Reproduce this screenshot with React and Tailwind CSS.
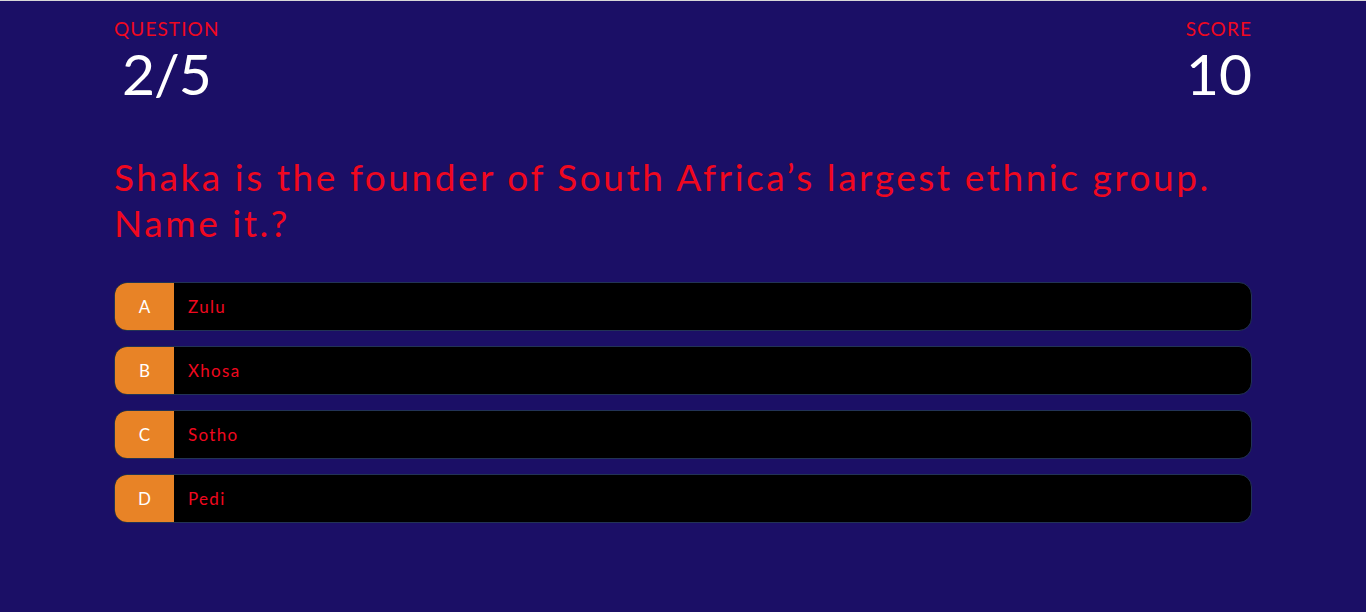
const answers = [
  { key: 'A', text: 'Zulu' },
  { key: 'B', text: 'Xhosa' },
  { key: 'C', text: 'Sotho' },
  { key: 'D', text: 'Pedi' },
]

const Stat = ({ label, value, align }) => (
  <div className={align === 'right' ? 'text-right' : 'text-left'}>
    <p className="text-[19px] leading-[22px] tracking-[1.1px] text-[#f0081f] uppercase">{label}</p>
    <p className={`mt-[3px] text-[57px] leading-[60px] text-white ${align === 'right' ? '' : 'pl-[8px] tracking-[-1px]'}`}>{value}</p>
  </div>
)

export default function App() {
  return (
    <div
      className="min-h-[612px] bg-[#1b0f66] border-t border-[#d8d8d8]"
      style={{ fontFamily: 'Lato, "Open Sans", sans-serif' }}
    >
      <div className="w-[1138px] mx-auto pt-[17px]">
        <div className="flex justify-between">
          <Stat label="Question" value="2/5" />
          <Stat label="Score" value="10" align="right" />
        </div>

        <h1 className="mt-[51px] text-[37px] leading-[46px] tracking-[2.55px] text-[#f0081f]">
          Shaka is the founder of South Africa’s largest ethnic group. Name it.?
        </h1>

        <div className="mt-[36px] flex flex-col gap-[15px]">
          {answers.map((a) => (
            <button
              key={a.key}
              type="button"
              className="flex h-[49px] items-stretch rounded-[13px] border border-[#223355] bg-black overflow-hidden text-left"
            >
              <span className="w-[59px] flex items-center justify-center bg-[#e88326] text-white text-[17px]">
                {a.key}
              </span>
              <span className="flex items-center pl-[14px] text-[17px] tracking-[1.3px] text-[#f0081f]">{a.text}</span>
            </button>
          ))}
        </div>
      </div>
    </div>
  )
}
